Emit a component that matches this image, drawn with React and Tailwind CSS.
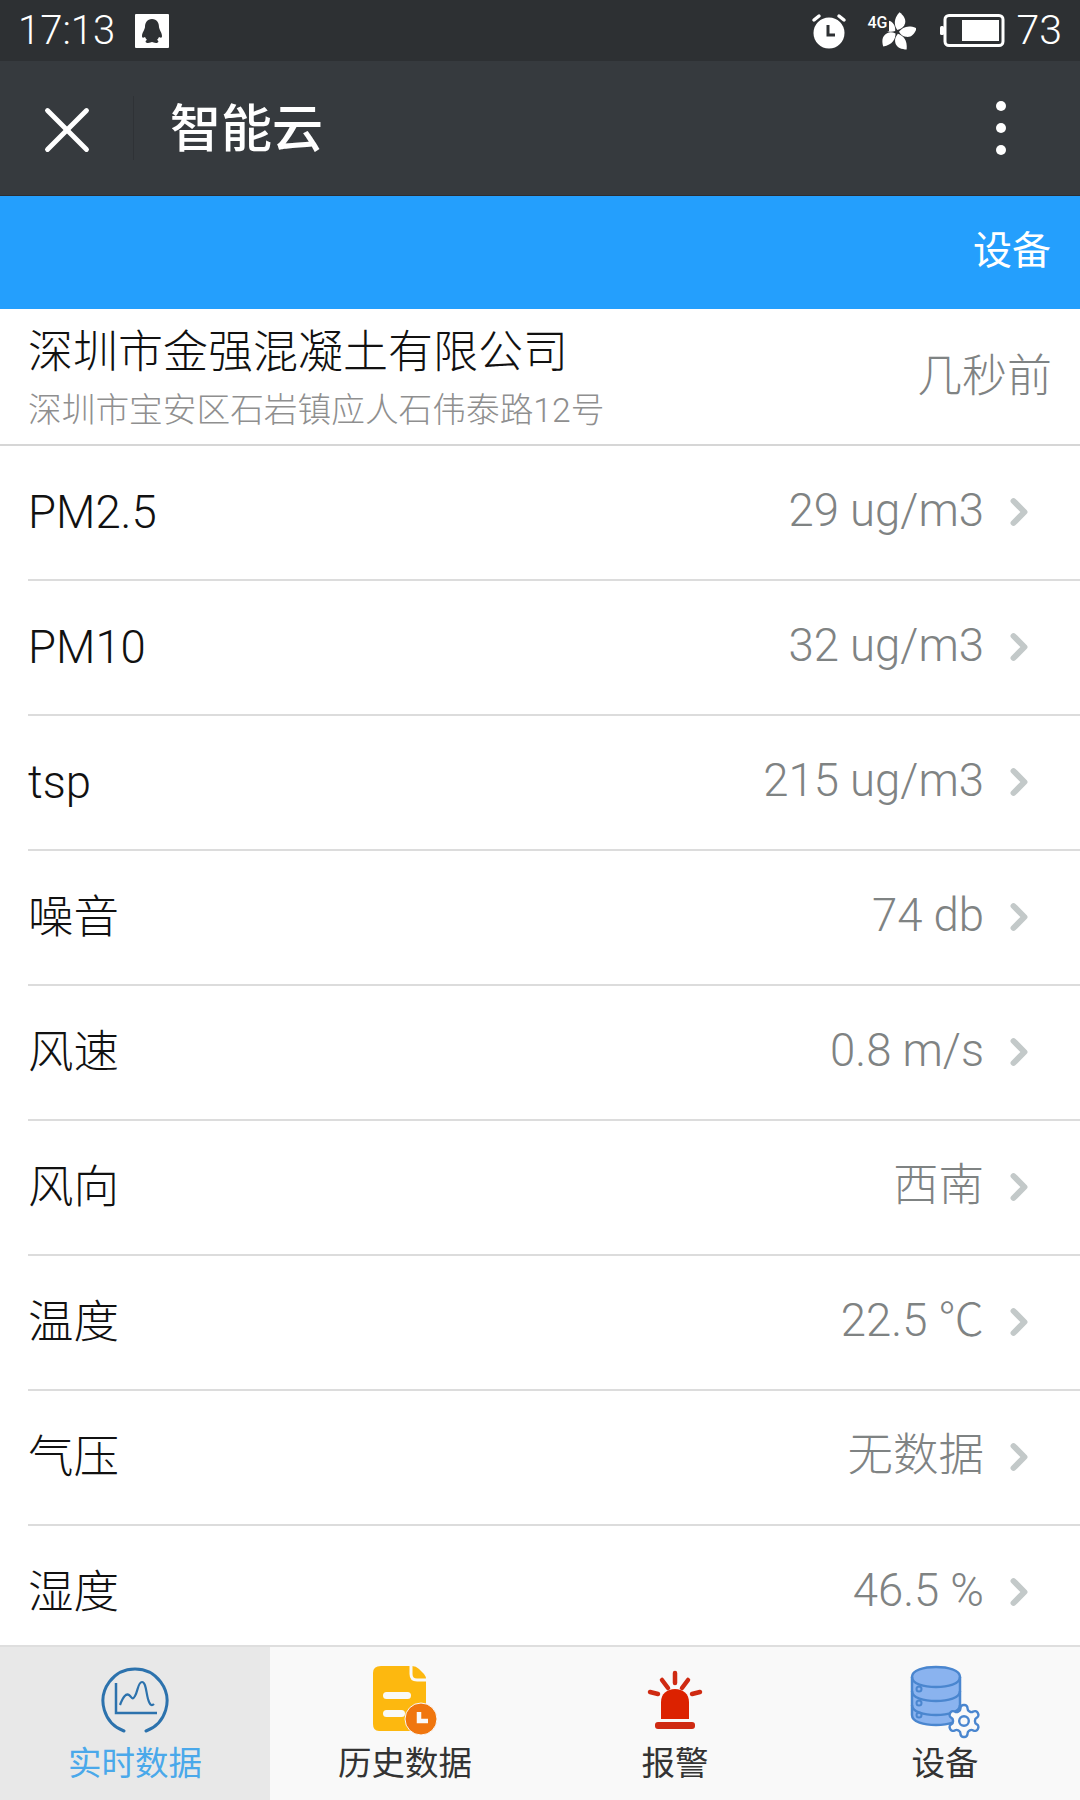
import { X, ChevronRight } from 'lucide-react'

const rows = [
  { label: 'PM2.5', value: '29 ug/m3' },
  { label: 'PM10', value: '32 ug/m3' },
  { label: 'tsp', value: '215 ug/m3' },
  { label: '噪音', value: '74 db' },
  { label: '风速', value: '0.8 m/s' },
  { label: '风向', value: '西南' },
  { label: '温度', value: '22.5 ℃' },
  { label: '气压', value: '无数据' },
  { label: '湿度', value: '46.5 %' },
]

function QqIcon() {
  return (
    <svg width="34" height="34" viewBox="0 0 34 34">
      <rect width="34" height="34" rx="1" fill="#fff" />
      <path d="M17 5c-5 0-7 4-7 8 0 2-3 6-3 9 0 2 1 2 3 1 .5 1 1 2 2 3-2 .5-2 3 1 3 2 0 3-1 4-1s2 1 4 1c3 0 3-2.500 1-3 1-1 1.500-2 2-3 2 1 3 1 3-1 0-3-3-7-3-9 0-4-2-8-7-8z" fill="#2d3033" />
    </svg>
  )
}

function AlarmIcon() {
  return (
    <svg width="36" height="36" viewBox="0 0 36 36">
      <circle cx="18" cy="20" r="15.500" fill="#fff" />
      <path d="M3 7l5-4M33 7l-5-4" stroke="#fff" strokeWidth="3.500" strokeLinecap="round" />
      <path d="M17 12v10h7" stroke="#2d3033" strokeWidth="3" fill="none" />
    </svg>
  )
}

function FlowerIcon() {
  const petal = 'M0 -2C-4 -6 -6 -12 -1 -20C3 -18 8 -14 6 -8C5 -5 3 -3.500 0 -2z'
  return (
    <svg width="38" height="38" viewBox="-19 -20 38 38">
      {[0, 72, 144, 216, 288].map((r) => (
        <path key={r} d={petal} fill="#fff" transform={`rotate(${r + 10})`} />
      ))}
    </svg>
  )
}

function BatteryIcon() {
  return (
    <svg width="65" height="33" viewBox="0 0 65 33">
      <rect x="5" y="1.500" width="58" height="30" rx="4" fill="none" stroke="#fff" strokeWidth="3" />
      <rect x="0" y="12" width="4" height="9" rx="1.500" fill="#fff" />
      <rect x="22" y="6" width="37" height="21" fill="#fff" />
    </svg>
  )
}

function ChartIcon() {
  return (
    <svg width="70" height="70" viewBox="0 0 70 70" fill="none" stroke="#2c72ad">
      <path d="M24 66A32 32 0 1 1 46 66" strokeWidth="3" strokeLinecap="round" />
      <path d="M16 18V48H57" strokeWidth="2.500" />
      <path d="M20 40c3-8 6-12 9-10s3 6 6 1 3-14 7-14 4 10 6 17 4 7 6 5" strokeWidth="2.200" />
    </svg>
  )
}

function HistoryIcon() {
  return (
    <svg width="70" height="70" viewBox="0 0 70 70">
      <g transform="translate(2 0)">
        <path d="M9 1H40Q44 1 47 4L52 9Q54 11 54 15V59Q54 66 47 66H7Q1 66 1 59V8Q1 1 9 1z" fill="#fdb80f" />
        <path d="M39 0V9Q39 15 45 15H55" fill="none" stroke="#f9f9f9" strokeWidth="3" />
        <rect x="11" y="27" width="28" height="7" rx="3.500" fill="#f9f9f9" />
        <rect x="11" y="45" width="22" height="7" rx="3.500" fill="#f9f9f9" />
        <circle cx="49" cy="54" r="16" fill="#f0760e" stroke="#f9f9f9" strokeWidth="1" />
        <path d="M47 47V56H56" fill="none" stroke="#f9f9f9" strokeWidth="4.500" />
      </g>
    </svg>
  )
}

function AlarmLightIcon() {
  return (
    <svg width="70" height="70" viewBox="0 0 70 70">
      <path d="M35 8V18M22 15L28 23M48 15L42 23M10 27L18 29M60 27L52 29" stroke="#cf2a12" strokeWidth="4.500" strokeLinecap="round" />
      <path d="M21 54V37C21 29 27 24 35 24S49 29 49 37V54z" fill="#dc2200" />
      <rect x="15" y="57" width="40" height="7" rx="3" fill="#cf2a12" />
    </svg>
  )
}

function DatabaseIcon() {
  return (
    <svg width="70" height="70" viewBox="0 0 70 70" className="overflow-visible">
      <path d="M2 12C2 5 14 2 26 2S50 5 50 12V50C50 57 38 60 26 60S2 57 2 50z" fill="#8ab3ef" stroke="#4a86cf" strokeWidth="2.500" />
      <path d="M2 12C2 19 14 22 26 22S50 19 50 12" fill="none" stroke="#4a86cf" strokeWidth="2.500" />
      <path d="M2 26C2 33 14 36 26 36S50 33 50 26M2 40C2 47 14 50 26 50S50 47 50 40" fill="none" stroke="#4a86cf" strokeWidth="2.500" />
      <circle cx="9" cy="24" r="2.500" fill="none" stroke="#4a86cf" strokeWidth="2" />
      <circle cx="9" cy="38" r="2.500" fill="none" stroke="#4a86cf" strokeWidth="2" />
      <circle cx="9" cy="50" r="2.500" fill="none" stroke="#4a86cf" strokeWidth="2" />
      <g transform="translate(34.800 36.800) scale(1.600)" fill="#f9f9f9" stroke="#4a86cf" strokeWidth="1.500">
        <path d="M12.220 2h-.44a2 2 0 0 0-2 2v.18a2 2 0 0 1-1 1.730l-.43.25a2 2 0 0 1-2 0l-.15-.08a2 2 0 0 0-2.730.73l-.22.38a2 2 0 0 0 .73 2.730l.15.1a2 2 0 0 1 1 1.720v.51a2 2 0 0 1-1 1.740l-.15.09a2 2 0 0 0-.73 2.730l.22.38a2 2 0 0 0 2.730.73l.15-.08a2 2 0 0 1 2 0l.43.25a2 2 0 0 1 1 1.730V20a2 2 0 0 0 2 2h.44a2 2 0 0 0 2-2v-.18a2 2 0 0 1 1-1.730l.43-.25a2 2 0 0 1 2 0l.15.08a2 2 0 0 0 2.730-.73l.22-.39a2 2 0 0 0-.73-2.730l-.15-.08a2 2 0 0 1-1-1.740v-.5a2 2 0 0 1 1-1.740l.15-.09a2 2 0 0 0 .73-2.730l-.22-.38a2 2 0 0 0-2.730-.73l-.15.08a2 2 0 0 1-2 0l-.43-.25a2 2 0 0 1-1-1.730V4a2 2 0 0 0-2-2z" />
        <circle cx="12" cy="12" r="3" fill="none" />
      </g>
    </svg>
  )
}

const tabs = [
  { label: '实时数据', icon: ChartIcon, active: true },
  { label: '历史数据', icon: HistoryIcon },
  { label: '报警', icon: AlarmLightIcon },
  { label: '设备', icon: DatabaseIcon },
]

export default function App() {
  return (
    <div className="flex flex-col w-[1080px] h-[1800px] overflow-hidden bg-white font-['Roboto','Noto_Sans_CJK_SC',sans-serif]">
      <div className="flex items-center h-[61px] shrink-0 pl-[18px] pr-[18px] bg-[#2d3033] text-white">
        <span className="text-[40px] leading-none font-light">17:13</span>
        <span className="ml-[20px] flex"><QqIcon /></span>
        <span className="ml-auto flex"><AlarmIcon /></span>
        <span className="relative ml-[21px] flex">
          <span className="ml-[10px] flex"><FlowerIcon /></span>
          <span className="absolute left-0 top-[3px] pr-[1px] text-[16px] leading-none font-medium bg-[#2d3033]">4G</span>
        </span>
        <span className="ml-[24px] flex"><BatteryIcon /></span>
        <span className="ml-[12px] text-[41px] leading-none font-light">73</span>
      </div>

      <div className="flex items-center h-[135px] shrink-0 bg-[#363a3e] border-b border-[#2b2e33] text-white">
        <X size={78} strokeWidth={1.5} className="ml-[28px] mt-[4px]" />
        <span className="ml-[27px] w-px h-[64px] bg-[#2f3236]" />
        <span className="ml-[36px] mt-[3px] text-[51px] leading-none font-medium">智能云</span>
        <span className="ml-auto mr-[74px] flex flex-col gap-[12px]">
          <i className="block w-[10px] h-[10px] rounded-full bg-white" />
          <i className="block w-[10px] h-[10px] rounded-full bg-white" />
          <i className="block w-[10px] h-[10px] rounded-full bg-white" />
        </span>
      </div>

      <div className="flex items-center justify-end h-[113px] shrink-0 pr-[29px] pb-[2px] bg-[#249ffd] text-white text-[39px]">
        设备
      </div>

      <div className="flex-1 min-h-0 overflow-hidden">
        <div className="flex items-center justify-between h-[137px] pl-[28px] pr-[28px] border-b-2 border-[#d6d6d6]">
          <div className="pt-[4px]">
            <div className="text-[45px] leading-[52px] font-light text-[#111]">深圳市金强混凝土有限公司</div>
            <div className="text-[33.700px] leading-[40px] mt-[12px] font-light text-[#8f8f8f]">深圳市宝安区石岩镇应人石伟泰路12号</div>
          </div>
          <div className="text-[45px] leading-none font-light text-[#7f8383]">几秒前</div>
        </div>

        {rows.map((row) => (
          <div key={row.label} className="flex items-center h-[135px] ml-[28px] pr-[39px] border-b-2 border-[#dcdcdc]">
            <span className="text-[45.500px] leading-none font-light text-[#111]">{row.label}</span>
            <span className="ml-auto mt-[-3px] text-[45.500px] leading-none font-light text-[#7f8383]">{row.value}</span>
            <ChevronRight size={44} strokeWidth={3.200} className="ml-[13px] mb-[2px] text-[#c3c9c9]" />
          </div>
        ))}
      </div>

      <div className="grid grid-cols-4 h-[155px] shrink-0 bg-[#f9f9f9] border-t-2 border-[#dedede]">
        {tabs.map(({ label, icon: Icon, active }) => (
          <div key={label} className={`flex flex-col items-center pt-[18px] ${active ? 'bg-[#e8e8e8]' : ''}`}>
            <Icon />
            <span className={`mt-[9px] text-[33.500px] leading-[40px] ${active ? 'text-[#4aa8ea]' : 'text-[#333]'}`}>{label}</span>
          </div>
        ))}
      </div>
    </div>
  )
}
